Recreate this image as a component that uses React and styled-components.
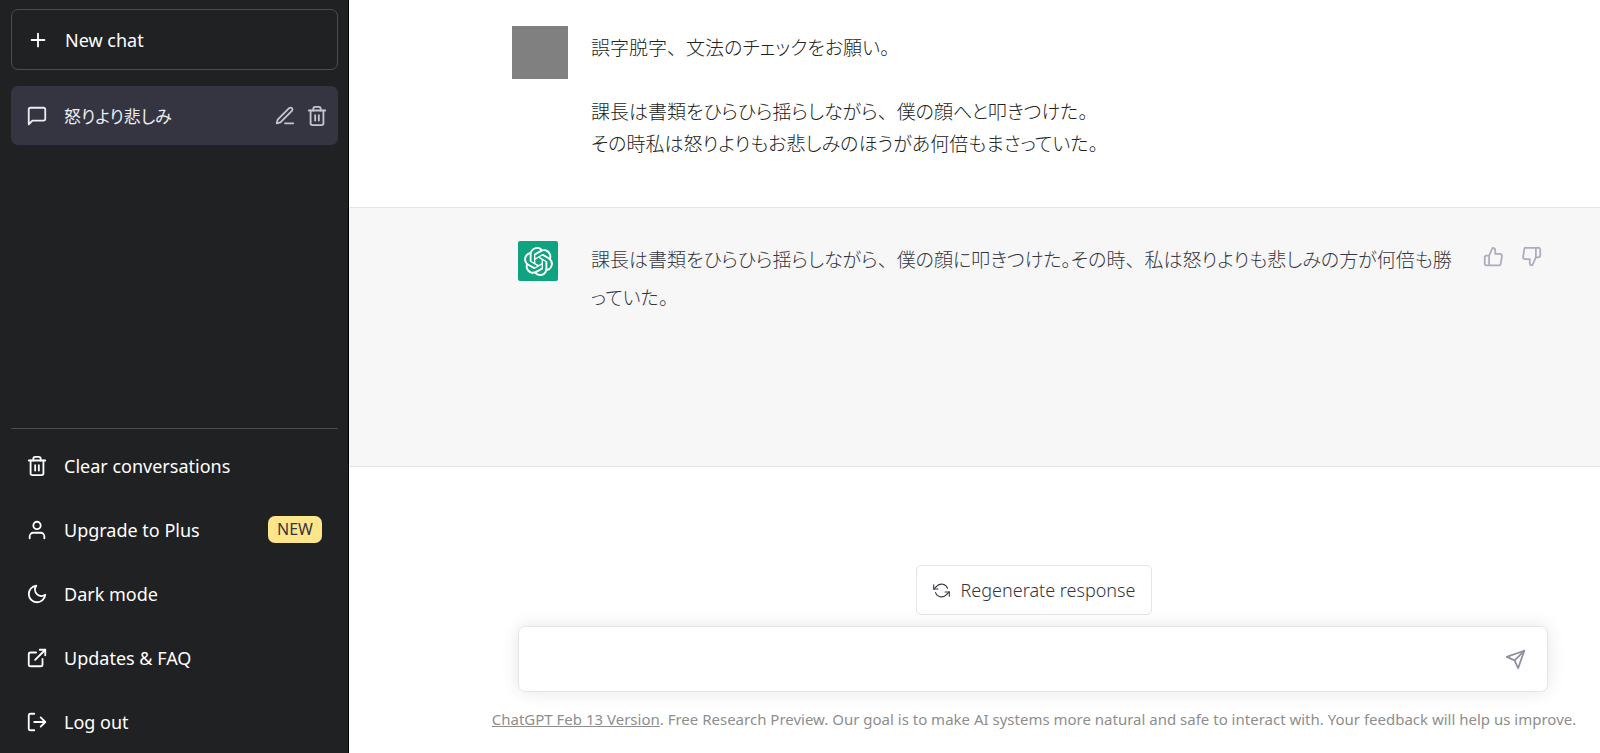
import React from "react";
import styled, { createGlobalStyle } from "styled-components";
import {
  FiPlus,
  FiMessageSquare,
  FiEdit3,
  FiTrash2,
  FiUser,
  FiMoon,
  FiExternalLink,
  FiLogOut,
  FiThumbsUp,
  FiThumbsDown,
  FiRefreshCcw,
  FiSend,
} from "react-icons/fi";
import { SiOpenai } from "react-icons/si";

const GlobalStyle = createGlobalStyle`
  * {
    box-sizing: border-box;
  }

  body {
    margin: 0;
    background-color: #fff;
    font-family: "Noto Sans", "Noto Sans CJK JP", sans-serif;
  }

  button,
  input {
    font-family: inherit;
  }

  svg {
    flex-shrink: 0;
  }
`;

const Container = styled.div`
  display: flex;
  min-height: 100vh;
`;

const Sidebar = styled.nav`
  display: flex;
  flex-direction: column;
  flex-shrink: 0;
  width: 349px;
  padding: 9px 10px 2px 11px;
  border-right: 1px solid #000;
  background-color: #202123;
`;

const NewChatBtn = styled.button`
  display: flex;
  align-items: center;
  gap: 16px;
  height: 61px;
  padding: 0 15px;
  border: 1px solid #4d4d4f;
  border-radius: 7px;
  background: none;
  color: #fff;
  font-size: 18px;
  cursor: pointer;
`;

const ChatItem = styled.div`
  display: flex;
  align-items: center;
  gap: 10px;
  height: 59px;
  margin-top: 16px;
  padding: 0 10px 0 15px;
  border-radius: 7px;
  background-color: #343541;
  color: #ececf1;
`;

const ChatLink = styled.a`
  display: flex;
  flex: 1;
  align-items: center;
  gap: 16px;
  color: inherit;
  font-size: 17px;
  font-feature-settings: "palt";
  text-decoration: none;
`;

const IconBtn = styled.button`
  display: flex;
  padding: 0;
  border: none;
  background: none;
  color: ${({ $color }) => $color};
  cursor: pointer;
`;

const Menu = styled.div`
  display: flex;
  flex-direction: column;
  gap: 5px;
  margin-top: auto;
  padding-top: 7px;
  border-top: 1px solid #4d4d4f;
`;

const MenuLink = styled.a`
  display: flex;
  align-items: center;
  gap: 16px;
  height: 59px;
  padding: 0 16px 0 15px;
  color: #fff;
  font-size: 18px;
  text-decoration: none;
`;

const Badge = styled.span`
  margin-left: auto;
  padding: 0 9px;
  border-radius: 7px;
  background-color: #fde68a;
  color: #343541;
  font-size: 16px;
  line-height: 27px;
`;

const Main = styled.main`
  display: flex;
  flex: 1;
  flex-direction: column;
  min-width: 0;
`;

const Message = styled.section`
  display: flex;
  align-items: flex-start;
  min-height: ${({ $answer }) => ($answer ? "260px" : "207px")};
  padding: ${({ $answer }) =>
    $answer ? "33px 58px 32px 169px" : "26px 58px 32px 163px"};
  border-top: ${({ $answer }) => ($answer ? "1px solid #e5e5e6" : "none")};
  border-bottom: ${({ $answer }) => ($answer ? "1px solid #e5e5e6" : "none")};
  background-color: ${({ $answer }) => ($answer ? "#f7f7f8" : "#fff")};
`;

const UserAvatar = styled.div`
  flex-shrink: 0;
  width: 56px;
  height: 53px;
  margin-right: 23px;
  background-color: #808080;
`;

const BotAvatar = styled.div`
  display: flex;
  flex-shrink: 0;
  align-items: center;
  justify-content: center;
  width: 40px;
  height: 40px;
  margin-right: 33px;
  border-radius: 2px;
  background-color: #10a37f;
  color: #fff;
`;

const Text = styled.div`
  flex: 1;
  margin-top: ${({ $answer }) => ($answer ? "0" : "6px")};
  color: ${({ $answer }) => ($answer ? "#343541" : "#222")};
  font-size: 19px;
  font-weight: 300;
  font-feature-settings: "palt";
  line-height: ${({ $answer }) => ($answer ? "38px" : "32px")};
`;

const Line = styled.p`
  min-height: 32px;
  margin: 0;
`;

/* commas keep their full width inside proportional kana */
const Comma = styled.span`
  font-feature-settings: normal;
`;

const Feedback = styled.div`
  display: flex;
  gap: 17px;
  margin: 5px 0 0 24px;
`;

const Footer = styled.footer`
  display: flex;
  flex-direction: column;
  margin-top: auto;
  padding: 0 20px 22px 139px;
`;

const RegenerateBtn = styled.button`
  display: flex;
  align-items: center;
  align-self: center;
  gap: 11px;
  height: 50px;
  padding: 0 16px;
  border: 1px solid #e5e5e6;
  border-radius: 5px;
  background-color: #fff;
  color: #343541;
  font-size: 18px;
  font-weight: 300;
  cursor: pointer;
`;

const InputForm = styled.form`
  display: flex;
  align-items: center;
  height: 66px;
  margin: 11px 32px 0 30px;
  padding: 0 21px 0 20px;
  border: 1px solid #e5e5e6;
  border-radius: 7px;
  background-color: #fff;
  box-shadow: 0 0 18px rgba(0, 0, 0, 0.1);
`;

const MessageInput = styled.input`
  flex: 1;
  border: none;
  outline: none;
  background: none;
  font-size: 18px;
`;

const Notice = styled.p`
  margin: 15px 0 0;
  color: #8e8e8e;
  font-size: 15px;
  line-height: 24px;
  text-align: center;
  white-space: nowrap;

  a {
    color: inherit;
  }
`;

const menuItems = [
  { label: "Clear conversations", Icon: FiTrash2 },
  { label: "Upgrade to Plus", Icon: FiUser, badge: "NEW" },
  { label: "Dark mode", Icon: FiMoon },
  { label: "Updates & FAQ", Icon: FiExternalLink },
  { label: "Log out", Icon: FiLogOut },
];

const question = [
  "誤字脱字、文法のチェックをお願い。",
  "",
  "課長は書類をひらひら揺らしながら、僕の顔へと叩きつけた。",
  "その時私は怒りよりもお悲しみのほうがあ何倍もまさっていた。",
];

const answer = [
  "課長は書類をひらひら揺らしながら、僕の顔に叩きつけた。その時、私は怒りよりも悲しみの方が何倍も勝",
  "っていた。",
];

function MessageText({ lines, $answer }) {
  return (
    <Text $answer={$answer}>
      {lines.map((line, i) => (
        <Line key={i}>
          {line.split("、").map((part, j) => (
            <React.Fragment key={j}>
              {j > 0 && <Comma>、</Comma>}
              {part}
            </React.Fragment>
          ))}
        </Line>
      ))}
    </Text>
  );
}

function App() {
  return (
    <Container>
      <GlobalStyle />
      <Sidebar>
        <NewChatBtn type="button">
          <FiPlus size={22} />
          New chat
        </NewChatBtn>
        <ChatItem>
          <ChatLink href="#chat">
            <FiMessageSquare size={22} />
            怒りより悲しみ
          </ChatLink>
          <IconBtn type="button" aria-label="Rename" $color="#c5c5d2">
            <FiEdit3 size={22} />
          </IconBtn>
          <IconBtn type="button" aria-label="Delete" $color="#c5c5d2">
            <FiTrash2 size={22} />
          </IconBtn>
        </ChatItem>
        <Menu>
          {menuItems.map(({ label, Icon, badge }) => (
            <MenuLink key={label} href="#menu">
              <Icon size={22} />
              {label}
              {badge && <Badge>{badge}</Badge>}
            </MenuLink>
          ))}
        </Menu>
      </Sidebar>
      <Main>
        <Message>
          <UserAvatar />
          <MessageText lines={question} />
        </Message>
        <Message $answer>
          <BotAvatar>
            <SiOpenai size={29} />
          </BotAvatar>
          <MessageText lines={answer} $answer />
          <Feedback>
            <IconBtn type="button" aria-label="Good response" $color="#acacbe">
              <FiThumbsUp size={21} />
            </IconBtn>
            <IconBtn type="button" aria-label="Bad response" $color="#acacbe">
              <FiThumbsDown size={21} />
            </IconBtn>
          </Feedback>
        </Message>
        <Footer>
          <RegenerateBtn type="button">
            <FiRefreshCcw size={17} strokeWidth={1.5} />
            Regenerate response
          </RegenerateBtn>
          <InputForm onSubmit={(e) => e.preventDefault()}>
            <MessageInput type="text" aria-label="Message" />
            <IconBtn type="submit" aria-label="Send" $color="#8e8ea0">
              <FiSend size={21} />
            </IconBtn>
          </InputForm>
          <Notice>
            <a href="#release-notes">ChatGPT Feb 13 Version</a>. Free Research
            Preview. Our goal is to make AI systems more natural and safe to
            interact with. Your feedback will help us improve.
          </Notice>
        </Footer>
      </Main>
    </Container>
  );
}

export default App;
